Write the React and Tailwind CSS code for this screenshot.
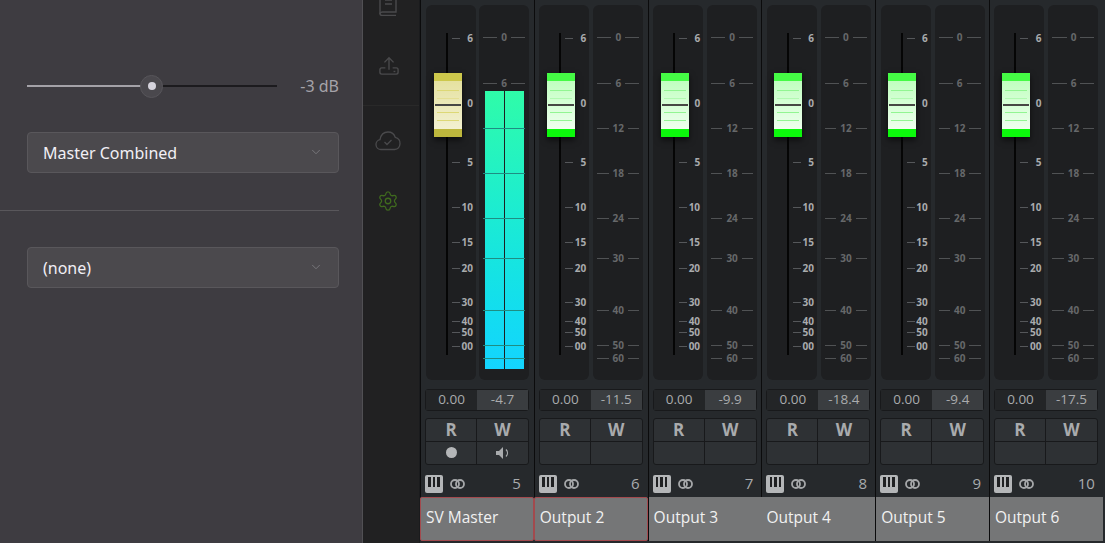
import { ChevronDown, Settings } from 'lucide-react'

const FADER_SCALE = [
  ['6', 38],
  ['0', 103],
  ['5', 162],
  ['10', 207],
  ['15', 242],
  ['20', 268],
  ['30', 302],
  ['40', 321],
  ['50', 332],
  ['00', 346],
]

const METER_SCALE = [
  ['0', 37],
  ['6', 83],
  ['12', 128],
  ['18', 173],
  ['24', 218],
  ['30', 258],
  ['40', 310],
  ['50', 345],
  ['60', 358],
]

const STRIPS = [
  { name: 'SV Master', num: 5, peak: '-4.7', master: true, selected: true },
  { name: 'Output 2', num: 6, peak: '-11.5', selected: true },
  { name: 'Output 3', num: 7, peak: '-9.9' },
  { name: 'Output 4', num: 8, peak: '-18.4', noEdge: true },
  { name: 'Output 5', num: 9, peak: '-9.4' },
  { name: 'Output 6', num: 10, peak: '-17.5' },
]

function Select({ label }) {
  return (
    <div className="h-[41px] flex items-center justify-between pl-[15px] pr-[15px] rounded bg-[#4b494d] border border-[#59575b] text-[#f1eff5] text-[16px]">
      <span>{label}</span>
      <ChevronDown className="w-[14px] h-[14px] text-[#7d7b80] -mt-[2px]" strokeWidth={1.5} />
    </div>
  )
}

function LeftPanel() {
  return (
    <div className="w-[362px] shrink-0 bg-[#3e3c41] pl-[27px] pr-[23px] pt-[72px]">
      <div className="h-[28px] flex items-center">
        <div className="w-[250px] flex items-center relative">
          <div className="h-[2px] w-[124px] bg-[#a4a2a8]" />
          <div className="h-[2px] flex-1 bg-[#1c1b1e]" />
          <div className="absolute left-[113px] w-[23px] h-[23px] rounded-full bg-[#4a484d] border border-[#57555a] flex items-center justify-center">
            <div className="w-[8px] h-[8px] rounded-full bg-[#d5d3dc]" />
          </div>
        </div>
        <span className="ml-auto text-[16px] text-[#a5a3a9]">-3 dB</span>
      </div>
      <div className="mt-[32px]">
        <Select label="Master Combined" />
      </div>
      <div className="h-px bg-[#59575b] mt-[37px] -ml-[27px]" />
      <div className="mt-[36px]">
        <Select label="(none)" />
      </div>
    </div>
  )
}

function Sidebar() {
  return (
    <div className="w-[57px] shrink-0 bg-[#212122] border-l border-[#515054] flex flex-col items-center overflow-hidden text-[#4a4a4c]">
      <svg width="18" height="24" viewBox="0 0 18 24" fill="none" stroke="currentColor" strokeWidth="1.4" className="-mt-[8px] shrink-0 mr-[6px]">
        <path d="M3 1h14v19H3.500C2.500 20 1 20.500 1 22s1.500 1.500 2.500 1.500H17" />
        <path d="M1 22V2" />
        <path d="M6 4h7M6 8h7M6 12h7" />
      </svg>
      <svg width="20" height="20" viewBox="0 0 22 22" fill="none" stroke="currentColor" strokeWidth="1.5" className="mt-[40px] shrink-0 mr-[5px]">
        <path d="M11 15V2M6 7l5-5 5 5" />
        <path d="M7 13H3a2 2 0 0 0-2 2v3a2 2 0 0 0 2 2h16a2 2 0 0 0 2-2v-3a2 2 0 0 0-2-2h-4" />
        <path d="M16 17h2" />
      </svg>
      <div className="w-full h-px bg-[#292929] mt-[29px] shrink-0" />
      <svg width="26" height="20" viewBox="0 0 26 20" fill="none" stroke="currentColor" strokeWidth="1.3" className="mt-[25px] shrink-0 mr-[6px]">
        <path d="M6 18.500a5 5 0 0 1-1-9.900C5.800 4 9 1 13 1c3.500 0 6.300 2.200 7.200 5.300a6.200 6.200 0 0 1-.7 12.200z" />
        <path d="M9.500 11l2.500 2.500 4.500-4.500" />
      </svg>
      <Settings className="w-[22px] h-[22px] mt-[39px] shrink-0 mr-[6px] text-[#3f6a1e]" strokeWidth={1.4} />
    </div>
  )
}

function FaderCap({ master }) {
  const line = master ? 'bg-[#ddd876]' : 'bg-[#92f592]'
  return (
    <div
      className={`absolute left-[7.500px] top-[68px] w-[28px] h-[64px] flex flex-col shadow-[0_3px_6px_rgba(0,0,0,0.6)] ${
        master ? 'bg-gradient-to-b from-[#e3df98] to-[#f5f3d8]' : 'bg-gradient-to-b from-[#b8ffb8] to-[#f5fff5]'
      }`}
    >
      <div className={`h-[8px] ${master ? 'bg-[#cdc84c]' : 'bg-[#45fb45]'}`} />
      <div className="flex-1 relative">
        <div className={`absolute left-[3px] right-[3px] top-[9px] h-px ${line}`} />
        <div className={`absolute left-[3px] right-[3px] top-[17px] h-px opacity-50 ${line}`} />
        <div className="absolute left-[1px] right-[1px] top-[23px] h-[2px] bg-[#474744]" />
        <div className={`absolute left-[3px] right-[3px] top-[31px] h-px ${line}`} />
        <div className={`absolute left-[3px] right-[3px] top-[39px] h-px ${line}`} />
      </div>
      <div className={`h-[8px] ${master ? 'bg-[#bdb73d]' : 'bg-[#0cf80c]'}`} />
    </div>
  )
}

function FaderPanel({ master }) {
  return (
    <div className="relative w-[50px] h-[375px] rounded-md bg-[#1e1f21] shrink-0">
      <div className="absolute left-[20px] top-[28px] w-[2px] h-[322px] bg-[#050505]" />
      {FADER_SCALE.map(([label, y]) => (
        <div key={label} className="absolute left-[26px] right-[3px] h-[10px] flex items-center" style={{ top: y - 10 }}>
          <div className="w-[8px] h-px bg-[#55575a]" />
          <span className="ml-auto text-[10px] font-bold leading-none text-[#a9abad]">{label}</span>
        </div>
      ))}
      <FaderCap master={master} />
    </div>
  )
}

function MeterPanel({ master }) {
  return (
    <div className="relative w-[50px] h-[375px] rounded-md bg-[#1e1f21] shrink-0">
      {METER_SCALE.map(([label, y]) => (
        <div key={label} className="absolute left-[4px] right-[4px] h-[10px] flex items-center gap-[4px]" style={{ top: y - 10 }}>
          <div className="flex-1 h-px bg-[#505254]" />
          <span className="text-[10px] font-bold leading-none text-[#66686a]">{label}</span>
          <div className="flex-1 h-px bg-[#505254]" />
        </div>
      ))}
      {master && (
        <div className="absolute left-[6px] top-[86px] w-[39px] h-[278px] flex gap-px bg-[#1e1f21]">
          <div className="flex-1 bg-gradient-to-b from-[#2ffca8] to-[#14d4ff]" />
          <div className="flex-1 bg-gradient-to-b from-[#2ffca8] to-[#14d4ff]" />
        </div>
      )}
      {master &&
        METER_SCALE.slice(2).map(([label, y]) => (
          <div key={label} className="absolute left-[4px] right-[4px] h-px bg-[#1f8d83]" style={{ top: y - 5 }} />
        ))}
    </div>
  )
}

function Strip({ strip }) {
  const { name, num, peak, master, selected, noEdge } = strip
  return (
    <div className="w-[113.800px] shrink-0 h-full flex flex-col">
      <div className="flex-1 flex flex-col bg-[#26292c] border-l border-[#0b0b0c]">
        <div className={`flex pt-[5px] ${master ? 'pl-[5px] gap-[3px]' : 'pl-[4.500px] gap-[4px]'}`}>
          <FaderPanel master={master} />
          <MeterPanel master={master} />
        </div>
        <div className="mt-[9px] ml-[4px] w-[104px] h-[22px] flex rounded-[3px] border border-[#18191b] text-[13.500px] leading-none text-[#a9abad]">
          <div className="w-[51px] bg-[#232527] flex items-center justify-center">0.00</div>
          <div className="flex-1 bg-[#3a3d40] flex items-center justify-center">{peak}</div>
        </div>
        <div className="mt-[7px] ml-[4px] w-[104px] h-[47px] grid grid-cols-2 grid-rows-2 rounded-[3px] border border-[#18191b] bg-[#2e3134]">
          <div className="border-r border-b border-[#18191b] flex items-center justify-center text-[17px] leading-none font-bold text-[#a9abad]">R</div>
          <div className="border-b border-[#18191b] flex items-center justify-center text-[17px] leading-none font-bold text-[#a9abad]">W</div>
          <div className="border-r border-[#18191b] flex items-center justify-center">
            {master && <div className="w-[11px] h-[11px] rounded-full bg-[#b4b6b8]" />}
          </div>
          <div className="flex items-center justify-center">
            {master && (
              <svg width="14" height="12" viewBox="0 0 14 12" className="text-[#a9abad]">
                <path d="M0 4h3l4-4v12l-4-4H0z" fill="currentColor" />
                <path d="M10 2.500a5 5 0 0 1 0 7" fill="none" stroke="currentColor" strokeWidth="1.300" />
              </svg>
            )}
          </div>
        </div>
        <div className={`mt-[6px] h-[25px] flex items-center ${master ? 'pl-[4px] pr-[13px]' : 'pl-[4px] pr-[8px]'}`}>
          <div className="w-[18px] h-[18px] rounded-[2px] bg-[#b4b6b8] flex justify-center gap-[2px] pt-[2px]">
            <div className="w-[2.500px] h-[10px] bg-[#1f2022]" />
            <div className="w-[2.500px] h-[10px] bg-[#1f2022]" />
            <div className="w-[2.500px] h-[10px] bg-[#1f2022]" />
          </div>
          <svg width="15" height="10" viewBox="0 0 15 10" fill="none" stroke="#a5a7a9" strokeWidth="1.800" className="ml-[7px]">
            <circle cx="5" cy="5" r="4" />
            <circle cx="10" cy="5" r="4" />
          </svg>
          <span className="ml-auto text-[15px] leading-none text-[#a9abad]">{num}</span>
        </div>
      </div>
      <div
        className={`h-[44px] flex items-center bg-[#757677] text-[15.500px] text-[#f1f1f1] pb-[2px] ${selected ? 'border border-[#a24a4e] rounded-[2px] pl-[5px]' : ''} ${
          noEdge ? '-ml-px pl-[6px]' : ''
        } ${!selected && !noEdge ? 'border-l border-[#0b0b0c] pl-[5px]' : ''}`}
      >
        {name}
      </div>
      <div className="h-[2px] bg-[#26292c]" />
    </div>
  )
}

export default function App() {
  return (
    <div className="h-[543px] w-[1105px] flex overflow-hidden bg-[#26292c] font-['Noto_Sans',sans-serif]">
      <LeftPanel />
      <Sidebar />
      <div className="w-px shrink-0 bg-[#1a1b1d]" />
      <div className="flex font-['Open_Sans',sans-serif]">
        {STRIPS.map((s) => (
          <Strip key={s.name} strip={s} />
        ))}
      </div>
    </div>
  )
}
